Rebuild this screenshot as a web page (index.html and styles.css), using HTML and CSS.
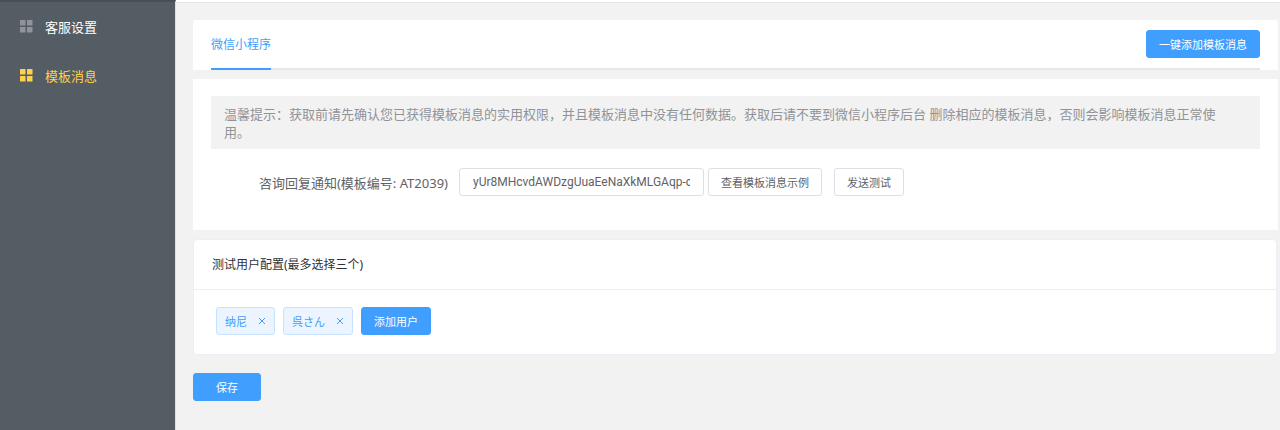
FILE: index.html
```html
<!DOCTYPE html>
<html lang="zh-CN">
<head>
    <meta charset="UTF-8">
    <meta name="viewport" content="width=device-width, initial-scale=1.0">
    <title>模板消息</title>
    <link rel="stylesheet" href="styles.css">
</head>
<body>
    <nav class="sidebar">
        <a class="menu-item" href="#">
            <svg class="menu-icon" viewBox="0 0 26 26" aria-hidden="true">
                <rect width="11" height="11" rx="1"/>
                <rect x="14" width="11" height="11" rx="1"/>
                <rect y="14" width="11" height="11" rx="1"/>
                <rect x="14" y="14" width="11" height="11" rx="1"/>
            </svg>
            客服设置
        </a>
        <a class="menu-item active" href="#">
            <svg class="menu-icon" viewBox="0 0 26 26" aria-hidden="true">
                <rect width="11" height="11" rx="1"/>
                <rect x="14" width="11" height="11" rx="1"/>
                <rect y="14" width="11" height="11" rx="1"/>
                <rect x="14" y="14" width="11" height="11" rx="1"/>
            </svg>
            模板消息
        </a>
    </nav>
    <main class="content">
        <section class="panel panel-tabs">
            <div class="tabs">
                <a class="tab" href="#">微信小程序</a>
                <button class="btn btn-primary" type="button">一键添加模板消息</button>
            </div>
        </section>

        <section class="panel panel-template">
            <p class="tip">温馨提示：获取前请先确认您已获得模板消息的实用权限，并且模板消息中没有任何数据。获取后请不要到微信小程序后台 删除相应的模板消息，否则会影响模板消息正常使用。</p>
            <div class="form-row">
                <label class="form-label" for="template-id">咨询回复通知(模板编号: AT2039)</label>
                <input class="form-input" id="template-id" type="text" value="yUr8MHcvdAWDzgUuaEeNaXkMLGAqp-o">
                <div class="form-actions">
                    <button class="btn" type="button">查看模板消息示例</button>
                    <button class="btn" type="button">发送测试</button>
                </div>
            </div>
        </section>

        <section class="card">
            <h2 class="card-header">测试用户配置(最多选择三个)</h2>
            <div class="card-body">
                <span class="tag">纳尼
                    <button class="tag-close" type="button" aria-label="删除纳尼">
                        <svg viewBox="0 0 8 8" aria-hidden="true"><path d="M1 1l6 6M7 1l-6 6"/></svg>
                    </button>
                </span>
                <span class="tag">呉さん
                    <button class="tag-close" type="button" aria-label="删除呉さん">
                        <svg viewBox="0 0 8 8" aria-hidden="true"><path d="M1 1l6 6M7 1l-6 6"/></svg>
                    </button>
                </span>
                <button class="btn btn-primary" type="button">添加用户</button>
            </div>
        </section>

        <button class="btn btn-primary btn-save" type="submit">保存</button>
    </main>
</body>
</html>
```

FILE: styles.css
```css
* {
    box-sizing: border-box;
}
body {
    display: flex;
    min-height: 100vh;
    margin: 0;
    background: #f2f2f2;
    color: #606266;
    font-family: "Noto Sans", "Noto Sans CJK SC", sans-serif;
    font-size: 12px;
}
button, input {
    font-family: inherit;
}

/* menu */
.sidebar {
    flex: none;
    width: 176px;
    background: #545c64;
    border-top: 2px solid #484f57;
    border-right: 1px solid #dcdfe6;
}
.menu-item {
    display: flex;
    align-items: center;
    gap: 12px;
    height: 49px;
    padding-left: 20px;
    color: #fff;
    font-size: 13px;
    text-decoration: none;
}
.menu-icon {
    width: 13px;
    height: 13px;
    fill: #909399;
}
.menu-item.active {
    color: #ffd04b;
}
.menu-item.active .menu-icon {
    fill: #ffd04b;
}

/* content */
.content {
    flex: 1;
    min-width: 0;
    padding: 18px 2px 28px 17px;
    border-top: 2px solid #fff;
    box-shadow: inset 0 1px #e4e4e4;
}
.panel {
    margin-bottom: 9px;
    padding: 0 18px;
    background: #fff;
}
.panel-tabs {
    border-radius: 3px 3px 0 0;
}
.tabs {
    display: flex;
    align-items: flex-start;
    justify-content: space-between;
    height: 50px;
    padding-top: 10px;
    border-bottom: 2px solid #e4e7ed;
}
.tab {
    height: 40px;
    border-bottom: 2px solid #409eff;
    color: #409eff;
    font-size: 12px;
    line-height: 30px;
    text-decoration: none;
}
.panel-template {
    padding-top: 17px;
    padding-bottom: 34px;
}
.tip {
    margin: 0 0 19px;
    padding: 9px 20px 8px 13px;
    background: #f2f2f2;
    color: #909399;
    font-size: 13px;
    line-height: 18px;
}
.form-row {
    display: flex;
    align-items: center;
}
.form-label {
    width: 248px;
    padding-right: 11px;
    font-size: 13px;
    text-align: right;
}
.form-input {
    width: 245px;
    height: 28px;
    padding: 0 13px;
    border: 1px solid #dcdfe6;
    border-radius: 3px;
    color: #606266;
    font-family: Roboto, sans-serif;
    font-size: 12px;
}
.form-actions {
    display: flex;
    gap: 12px;
    margin-left: 4px;
}

.btn {
    height: 28px;
    padding: 0 12px;
    border: 1px solid #dcdfe6;
    border-radius: 3px;
    background: #fff;
    color: #606266;
    font-size: 11px;
}
.btn-primary {
    border-color: #409eff;
    background: #409eff;
    color: #fff;
}
.btn-save {
    padding: 0 22px;
}

/* test users */
.card {
    margin: 0 1px 18px 0;
    border: 1px solid #ebeef5;
    border-radius: 4px;
    background: #fff;
}
.card-header {
    margin: 0;
    padding: 0 18px;
    border-bottom: 1px solid #ebeef5;
    color: #303133;
    font-size: 12px;
    font-weight: normal;
    line-height: 49px;
}
.card-body {
    display: flex;
    align-items: center;
    gap: 8px;
    padding: 17px 22px 19px;
}
.tag {
    display: flex;
    align-items: center;
    gap: 11px;
    height: 28px;
    padding: 0 8px;
    border: 1px solid #c6e2ff;
    border-radius: 3px;
    background: #ecf5ff;
    color: #409eff;
    font-size: 11px;
}
.tag-close {
    display: flex;
    padding: 0;
    border: 0;
    background: none;
}
.tag-close svg {
    width: 8px;
    height: 8px;
    stroke: #409eff;
    fill: none;
}
```
